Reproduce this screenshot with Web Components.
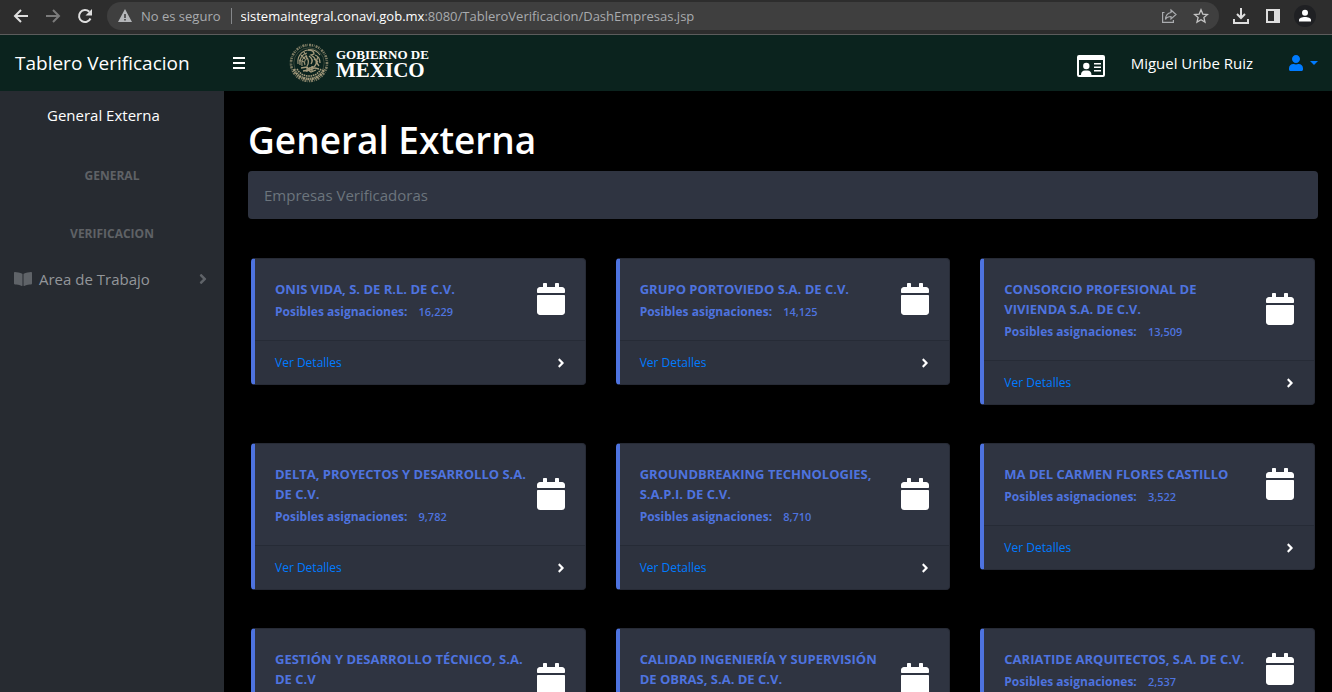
<!DOCTYPE html>
<html lang="es">
<head>
<meta charset="utf-8">
<title>Tablero Verificacion</title>
<style>
  body { margin: 0; background: #000; color: #fff; font: 15px/24px "Open Sans", "Noto Sans", sans-serif; }
</style>
</head>
<body>
<tablero-app>
  <browser-bar slot="browser"></browser-bar>
  <site-header slot="header" user="Miguel Uribe Ruiz"></site-header>
  <side-nav slot="nav"></side-nav>
  <company-card count="16,229">ONIS VIDA, S. DE R.L. DE C.V.</company-card>
  <company-card count="14,125">GRUPO PORTOVIEDO S.A. DE C.V.</company-card>
  <company-card count="13,509">CONSORCIO PROFESIONAL DE VIVIENDA S.A. DE C.V.</company-card>
  <company-card count="9,782">DELTA, PROYECTOS Y DESARROLLO S.A. DE C.V.</company-card>
  <company-card count="8,710">GROUNDBREAKING TECHNOLOGIES, S.A.P.I. DE C.V.</company-card>
  <company-card count="3,522">MA DEL CARMEN FLORES CASTILLO</company-card>
  <company-card count="">GESTIÓN Y DESARROLLO TÉCNICO, S.A. DE C.V</company-card>
  <company-card count="">CALIDAD INGENIERÍA Y SUPERVISIÓN DE OBRAS, S.A. DE C.V.</company-card>
  <company-card count="2,537">CARIATIDE ARQUITECTOS, S.A. DE C.V.</company-card>
</tablero-app>

<script>
const define = (name, html, setup) => customElements.define(name, class extends HTMLElement {
  constructor() {
    super();
    this.attachShadow({ mode: "open" }).innerHTML = `<style>:host,*{box-sizing:border-box}svg{display:block;flex:none}
      button{display:flex;align-items:center;justify-content:center;padding:0;border:0;background:none;color:inherit;font:inherit;cursor:pointer}
      a{text-decoration:none}</style>` + html;
  }
  connectedCallback() { if (setup) setup(this, this.shadowRoot); }
});

const angle = '<path fill="currentColor" d="M224.3 273l-136 136c-9.4 9.4-24.6 9.4-33.9 0l-22.6-22.6c-9.4-9.4-9.4-24.6 0-33.9l96.4-96.4-96.4-96.4c-9.4-9.4-9.4-24.6 0-33.9L54.3 103c9.4-9.4 24.6-9.4 33.9 0l136 136c9.5 9.4 9.5 24.6.1 34z"/>';

define("tablero-app", `
<style>
  :host { display: grid; grid-template: auto auto 1fr / 224px minmax(0, 1fr); height: 100vh; }
  slot[name=browser], slot[name=header] { display: block; grid-column: 1 / -1; }
  slot[name=nav] { display: grid; }
  main { overflow: auto; scrollbar-width: none; padding: 25px 14px 24px 24px; }
  h1 { margin: 0 0 7px; font-size: 37px; line-height: 48px; font-weight: 600; }
  ol { margin: 0 0 39px; padding: 12px 16px; list-style: none; border-radius: 4px; background: #2f3441; color: #6c757d; }
  section { display: grid; grid-template-columns: repeat(3, minmax(0, 1fr)); gap: 38px 30px; align-items: start; padding: 0 3px; }
</style>
<slot name="browser"></slot>
<slot name="header"></slot>
<slot name="nav"></slot>
<main>
  <h1>General Externa</h1>
  <nav aria-label="Ruta"><ol><li>Empresas Verificadoras</li></ol></nav>
  <section><slot></slot></section>
</main>`);

define("browser-bar", `
<style>
  :host { display: flex; align-items: center; height: 35px; padding: 0 16px 3px 13px; background: #2d2d2d; border-bottom: 1px solid #5c5c5c; color: #dedede; font-size: 13px; line-height: 20px; }
  .nav { display: flex; gap: 16px; margin-right: 14px; }
  .off { color: #7b7b7b; }
  .url { flex: 1; min-width: 0; display: flex; align-items: center; height: 28px; padding: 0 10px; border-radius: 14px; background: #3f3f3f; color: #a9abae; }
  .sep { width: 1px; height: 16px; margin: 0 9px 0 10px; background: #85878a; }
  .warn { margin-right: 8px; }
  .addr { flex: 1; white-space: nowrap; overflow: hidden; }
  b { font-weight: 400; color: #fff; }
  .url button + button { margin-left: 16px; }
  .tools { display: flex; align-items: center; gap: 10px; margin-left: 11px; }
  .tools button { width: 22px; }
</style>
<div class="nav">
  <button aria-label="Atrás"><svg width="16" height="16" viewBox="0 0 16 16" fill="none" stroke="currentColor" stroke-width="2"><path d="M15 8H2M8 2L2 8l6 6"/></svg></button>
  <button class="off" aria-label="Adelante"><svg width="16" height="16" viewBox="0 0 16 16" fill="none" stroke="currentColor" stroke-width="2"><path d="M1 8h13M8 2l6 6-6 6"/></svg></button>
  <button aria-label="Recargar"><svg width="16" height="16" viewBox="0 0 16 16" fill="none" stroke="currentColor" stroke-width="2"><path d="M13.5 10.5A6 6 0 1 1 12.3 3.8"/><path fill="currentColor" stroke="none" d="M15 1v6.5H8.5z"/></svg></button>
</div>
<div class="url">
  <svg class="warn" width="16" height="16" viewBox="0 0 16 16"><path fill="#b4b6b9" fill-rule="evenodd" d="M8 1L1 14h14zM7.2 6h1.6v4H7.2zm0 5h1.6v1.6H7.2z"/></svg>
  <span>No es seguro</span><span class="sep"></span>
  <span class="addr"><b>sistemaintegral.conavi.gob.mx</b>:8080/TableroVerificacion/DashEmpresas.jsp</span>
  <button aria-label="Compartir"><svg width="16" height="16" viewBox="0 0 16 16" fill="none" stroke="currentColor" stroke-width="1.2"><path d="M3.500 4.500H1.600V14.400H12.400V12"/><path d="M10 2l5 4.500-5 4.500V8.500C7 8.500 5.500 9.500 4.500 11.500 4.700 7.500 6.500 5 10 4.500z"/></svg></button>
  <button aria-label="Favorito"><svg width="16" height="16" viewBox="0 0 16 16" fill="none" stroke="#c4c4c4" stroke-width="1.300"><path d="M8 1.800l1.800 4.300 4.700.4-3.600 3 1.100 4.600L8 11.700l-4 2.400 1.100-4.600-3.600-3 4.700-.4z"/></svg></button>
</div>
<div class="tools">
  <button aria-label="Descargas"><svg width="18" height="18" viewBox="0 0 18 18" fill="none" stroke="currentColor" stroke-width="2"><path d="M9 1v9M5 7l4 4 4-4M2 12v4h14v-4"/></svg></button>
  <button aria-label="Panel lateral"><svg width="16" height="16" viewBox="0 0 16 16"><path fill="currentColor" fill-rule="evenodd" d="M1 1h14v14H1zm2 2v10h6V3z"/></svg></button>
  <button aria-label="Perfil"><svg width="22" height="22" viewBox="0 0 22 22"><circle cx="11" cy="11" r="11" fill="#1f2023"/><circle cx="11" cy="7.700" r="3" fill="#fff"/><path fill="#fff" d="M5 16.500v-1.500c0-2 3-3 6-3s6 1 6 3v1.500z"/></svg></button>
</div>`);

define("gob-logo", `
<style>
  :host { display: flex; align-items: center; gap: 7px; color: #fff; }
  div { font-family: "Liberation Serif", serif; font-weight: 700; }
  span { display: block; font-size: 13px; line-height: 13px; }
  strong { display: block; font-size: 21px; line-height: 18px; }
</style>
<svg width="40" height="40" viewBox="0 0 40 40" fill="none" stroke="#a59b7c" aria-hidden="true">
  <circle cx="20" cy="20" r="18" stroke-width="2.600" stroke-dasharray="1.300 .9 .6 1.100 2 .8" opacity=".75"/>
  <circle cx="20" cy="20" r="15.200" stroke-width=".6" opacity=".5"/>
  <path stroke-width="2.400" stroke-dasharray="2 .7 1.200 .5" d="M5 26c2 6 8 10 15 10s13-4 15-10"/>
  <path stroke-width="1.500" stroke-dasharray="1.600 .7" d="M8 26c3 5 7 7 12 7s9-2 12-7"/>
  <path stroke-width="1.100" d="M9 21C8 14 12 8 19 7c5-1 9 1 12 5M11 22c-1-6 2-11 7-12M13 23c-1-5 1-9 5-10M16 22c-1-3 0-6 3-7M12 12l4 4M10 17l5 2M15 9l3 5"/>
  <path stroke-width="1.300" d="M19 7c4 0 6 2 6 4l-3 1c3 2 6 5 5 9-1 3-4 4-7 4M20 13c3 2 4 5 2 8M17 14c3 2 3 6 1 9M26 12c3 1 5 4 5 8M29 14c-2 3-2 6 1 9M25 16l4 3M12 25l6-1 3 3 5-2 4 1M14 28l5-1 3 2 5-2M18 24v5M23 23v5"/>
</svg>
<div><span>GOBIERNO DE</span><strong>MÉXICO</strong></div>`);

define("site-header", `
<style>
  :host { display: flex; align-items: center; height: 56px; padding: 0 14px 0 15px; background: #0b231e; }
  .brand { width: 217px; color: #fff; font-size: 19px; }
  .menu { width: 14px; margin-right: 43px; }
  .right { display: flex; align-items: center; margin-left: auto; }
  .card { margin: 6px 26px 0 0; }
  .user { margin-left: 36px; gap: 7px; color: #007bff; }
</style>
<a class="brand" href="#">Tablero Verificacion</a>
<button class="menu" aria-label="Menú"><svg width="12" height="12" viewBox="0 0 12 12"><path fill="#fff" d="M0 0h12v2H0zM0 5h12v2H0zM0 10h12v2H0z"/></svg></button>
<gob-logo></gob-logo>
<div class="right">
  <svg class="card" width="28" height="24" viewBox="0 0 28 24"><path fill="#fff" fill-rule="evenodd" d="M2 1h24a2 2 0 0 1 2 2v18a2 2 0 0 1-2 2H2a2 2 0 0 1-2-2V3a2 2 0 0 1 2-2zm0 5v15h2c0-3 1.500-4.500 4-4.500h2.500c2.500 0 4 1.500 4 4.500H26V6z"/><circle cx="9.300" cy="12" r="3.200" fill="#fff"/><path fill="#fff" d="M17 9h7v1.500h-7zM17 12.500h7V14h-7zM17 16h7v1.500h-7z"/></svg>
  <span id="name"></span>
  <button class="user" aria-label="Cuenta"><svg width="14" height="16" viewBox="0 0 448 512"><path fill="currentColor" d="M224 256c70.700 0 128-57.300 128-128S294.700 0 224 0 96 57.300 96 128s57.300 128 128 128zm89.600 32h-16.700c-22.200 10.200-46.900 16-72.900 16s-50.600-5.800-72.900-16h-16.700C60.200 288 0 348.200 0 422.400V464c0 26.500 21.500 48 48 48h352c26.500 0 48-21.500 48-48v-41.600c0-74.200-60.200-134.400-134.400-134.400z"/></svg><svg width="8" height="4" viewBox="0 0 8 4"><path fill="currentColor" d="M0 0h8L4 4z"/></svg></button>
</div>`, (el, root) => { root.getElementById("name").textContent = el.getAttribute("user"); });

define("side-nav", `
<style>
  :host { display: block; background: #272b31; color: #5f6266; }
  .top { display: block; padding: 12px 0 0 47px; color: #fff; }
  h2 { margin: 0; padding: 40px 0 0; font-size: 12px; line-height: 18px; font-weight: 700; text-align: center; }
  .work { display: flex; align-items: center; margin-top: 24px; padding: 0 16px 0 14px; color: #93969a; }
  .work span { flex: 1; margin-left: 7px; }
  svg { color: #5f6368; }
</style>
<nav aria-label="Principal">
  <a class="top" href="#">General Externa</a>
  <h2>GENERAL</h2>
  <h2>VERIFICACION</h2>
  <a class="work" href="#"><svg width="18" height="16" viewBox="0 0 576 512"><path fill="currentColor" d="M542.220 32.050c-54.800 3.110-163.720 14.430-230.960 55.590-4.640 2.840-7.270 7.890-7.270 13.170v363.870c0 11.550 12.630 18.850 23.280 13.490 69.180-34.820 169.230-44.320 218.700-46.920 16.890-.89 30.020-14.430 30.020-30.660V62.750c.01-17.710-15.350-31.740-33.770-30.700zM264.730 87.640C197.500 46.480 88.580 35.170 33.780 32.050 15.360 31.010 0 45.040 0 62.750V400.600c0 16.240 13.130 29.780 30.020 30.660 49.490 2.600 149.590 12.110 218.770 46.950 10.620 5.350 23.210-1.940 23.210-13.460V100.630c0-5.290-2.620-10.140-7.270-12.990z"/></svg><span>Area de Trabajo</span><svg width="10" height="16" viewBox="0 0 256 512">${angle}</svg></a>
</nav>`);

define("company-card", `
<style>
  :host { display: block; border: 1px solid #272b36; border-left: 4px solid #4e73df; border-radius: 4px; background: #2f3441; color: #4e73df; }
  .body { display: flex; align-items: center; gap: 8px; padding: 20px 20px 18px; }
  .text { flex: 1; min-width: 0; }
  h2, p { margin: 0; font-size: 13px; line-height: 20px; font-weight: 700; }
  p { margin-top: 3px; font-size: 12px; }
  small { margin-left: 8px; font-size: 11px; font-weight: 600; }
  footer { display: flex; align-items: center; justify-content: space-between; height: 44px; padding: 0 20px; border-top: 1px solid #262b36; background: #2d323e; border-radius: 0 0 3px 0; font-size: 12px; }
  a { color: #007bff; }
  footer svg, .body svg { color: #fff; }
  .body svg { margin-bottom: 4px; }
</style>
<div class="body">
  <div class="text"><h2><slot></slot></h2><p>Posibles asignaciones: <small></small></p></div>
  <svg width="28" height="32" viewBox="0 0 448 512"><path fill="currentColor" d="M12 192h424c6.600 0 12 5.400 12 12v260c0 26.500-21.500 48-48 48H48c-26.500 0-48-21.500-48-48V204c0-6.600 5.400-12 12-12zm436-44v-36c0-26.500-21.500-48-48-48h-48V12c0-6.600-5.400-12-12-12h-40c-6.600 0-12 5.400-12 12v52H160V12c0-6.600-5.400-12-12-12h-40c-6.600 0-12 5.400-12 12v52H48C21.500 64 0 85.500 0 112v36c0 6.600 5.400 12 12 12h424c6.600 0 12-5.400 12-12z"/></svg>
</div>
<footer><a href="#">Ver Detalles</a><svg width="8" height="14" viewBox="0 0 256 512">${angle}</svg></footer>`,
(el, root) => { root.querySelector("small").textContent = el.getAttribute("count"); });
</script>
</body>
</html>
